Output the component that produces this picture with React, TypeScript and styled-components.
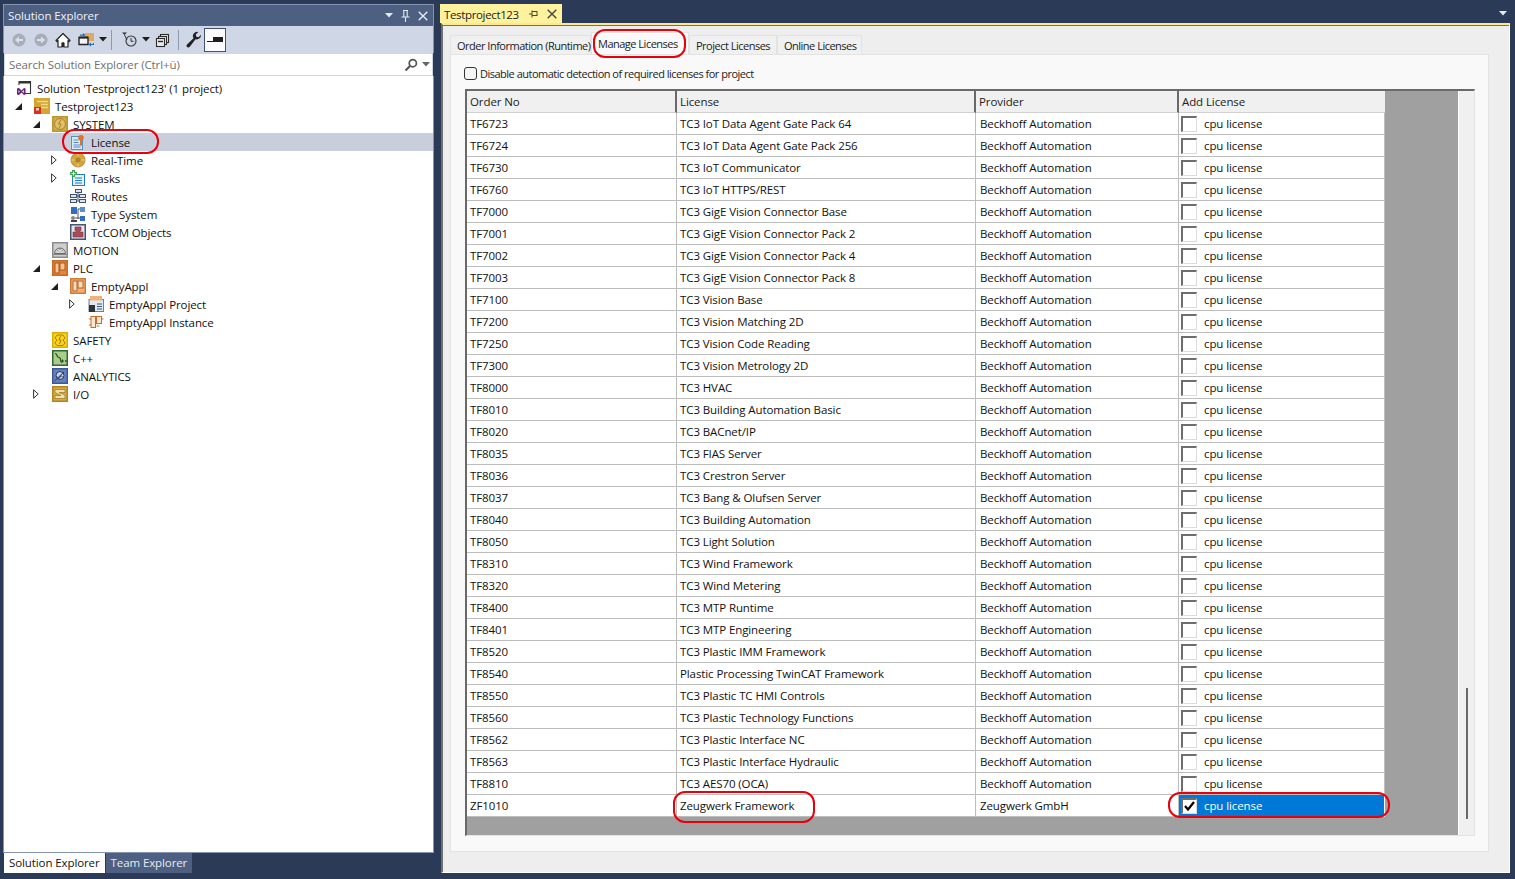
import React from 'react';
import styled, { createGlobalStyle } from 'styled-components';

const UI_FONT = '"Open Sans", "Noto Sans", "Liberation Sans", sans-serif';

const GlobalStyle = createGlobalStyle`
  html, body {
    margin: 0;
    padding: 0;
    background: #2a3a57;
    overflow: hidden;
  }
  * {
    box-sizing: border-box;
  }
`;

const Page = styled.div`
  width: 1515px;
  height: 879px;
  display: flex;
  background: #2a3a57;
  padding: 4px 0 6px 3px;
  font-family: ${UI_FONT};
  font-size: 11.5px;
  letter-spacing: -0.1px;
  color: #111;
`;

const Explorer = styled.section`
  width: 431px;
  display: flex;
  flex-direction: column;
  margin-right: 6px;
`;

const TitleBar = styled.div`
  height: 22px;
  background: #4d6082;
  color: #f0f2f7;
  display: flex;
  align-items: center;
  padding: 0 2px 0 4px;
  border: 1px solid #8494b5;
  border-bottom: 0;
`;

const TitleText = styled.span`
  flex: 1;
`;

const TitleButton = styled.span`
  width: 17px;
  display: flex;
  justify-content: center;
  align-items: center;
`;

const Toolbar = styled.div`
  height: 27px;
  background: #cfd6e5;
  display: flex;
  align-items: center;
  padding-left: 7px;
  border-left: 1px solid #8494b5;
  border-right: 1px solid #8494b5;
`;

const ToolSlot = styled.span<{ $ml?: number }>`
  display: flex;
  align-items: center;
  margin-left: ${(p) => p.$ml ?? 0}px;
`;

const ToolSep = styled.span<{ $ml: number }>`
  width: 1px;
  height: 20px;
  background: #8f99ad;
  margin-left: ${(p) => p.$ml}px;
`;

const ToggleButton = styled.span`
  width: 22px;
  height: 24px;
  margin-left: 2px;
  background: #fbfbfd;
  border: 1px solid #3f5478;
  display: flex;
  align-items: center;
  justify-content: center;
`;

const SearchBar = styled.div`
  height: 23px;
  background: #fff;
  margin: 0 1px;
  border: 1px solid #cfd6e5;
  display: flex;
  align-items: center;
  padding: 0 2px 0 4px;
  color: #6f6f6f;
`;

const SearchText = styled.span`
  flex: 1;
`;

const Tree = styled.div`
  flex: 1;
  background: #fff;
  padding-top: 3px;
  border-left: 1px solid #8494b5;
  border-right: 1px solid #8494b5;
  border-bottom: 1px solid #8494b5;
`;

const TreeRow = styled.div<{ $level: number; $selected?: boolean }>`
  height: 18px;
  display: flex;
  align-items: center;
  padding-left: ${(p) => p.$level * 18}px;
  background: ${(p) => (p.$selected ? '#c9cedc' : 'transparent')};
  white-space: nowrap;
`;

const Expander = styled.span`
  width: 11px;
  height: 18px;
  display: flex;
  align-items: center;
  margin-right: 1px;
`;

const ExpanderShift = styled.span`
  display: flex;
  margin-left: -7px;
`;

const NodeIcon = styled.span`
  width: 16px;
  height: 16px;
  display: flex;
`;

const NodeLabel = styled.span`
  position: relative;
  margin-left: 5px;
`;

const Ring = styled.span`
  position: absolute;
  border: 2px solid #e8000d;
  border-radius: 12px;
  pointer-events: none;
  z-index: 2;
`;

const LicenseRing = styled(Ring)`
  left: -29px;
  top: -6px;
  width: 97px;
  height: 25px;
`;

const BottomTabs = styled.div`
  height: 20px;
  display: flex;
  padding-left: 1px;
`;

const BottomTab = styled.div<{ $active?: boolean }>`
  height: 20px;
  padding: 0 5px ${(p) => (p.$active ? 2 : 1)}px 5px;
  display: flex;
  align-items: center;
  margin-right: 1px;
  background: ${(p) => (p.$active ? '#fff' : '#4d6082')};
  color: ${(p) => (p.$active ? '#111' : '#e8ebf2')};
`;

const DocumentArea = styled.main`
  flex: 1;
  display: flex;
  flex-direction: column;
  margin-right: 5px;
`;

const DocTabs = styled.div`
  height: 19px;
  display: flex;
  align-items: center;
  justify-content: space-between;
`;

const DocTab = styled.div`
  width: 122px;
  height: 19px;
  background: #fff29d;
  display: flex;
  align-items: center;
  padding: 1px 0 0 4px;
  color: #222;
`;

const DocTabText = styled.span`
  flex: 1;
  letter-spacing: -0.35px;
`;

const DocTabButton = styled.span`
  width: 15px;
  margin-right: 3px;
  display: flex;
  justify-content: center;
`;

const WellMenu = styled.span`
  display: flex;
  margin-right: 3px;
`;

const DocBody = styled.div`
  flex: 1;
  margin-left: 1px;
  border-top: 2px solid #ffe88c;
  background: #eeeeef;
  border-right: 1px solid #fff;
  border-bottom: 1px solid #fff;
  border-left: 2px solid #707070;
  box-shadow: inset 0 1px 0 #707070;
  padding: 10px 20px 20px 7px;
  display: flex;
  flex-direction: column;
`;

const TabStrip = styled.div`
  height: 19px;
  display: flex;
  align-items: flex-end;
  font-size: 11px;
  letter-spacing: -0.5px;
  color: #222;
`;

const FormTab = styled.div<{ $active?: boolean; $width: number }>`
  position: relative;
  height: ${(p) => (p.$active ? 22 : 19)}px;
  width: ${(p) => p.$width}px;
  padding: ${(p) => (p.$active ? '0 0 0 6px' : '0 0 0 6px')};
  display: flex;
  align-items: center;
  background: ${(p) => (p.$active ? '#f9f9f9' : '#f0f0f0')};
  border: 1px solid #e3e3e3;
  border-bottom: 0;
  white-space: nowrap;
`;

const ManageRing = styled(Ring)`
  left: 1px;
  top: -4px;
  width: 93px;
  height: 29px;
`;

const TabPanel = styled.div`
  flex: 1;
  background: #f9f9f9;
  border: 1px solid #e3e3e3;
  padding: 0 13px 15px 14px;
  display: flex;
  flex-direction: column;
`;

const OptionRow = styled.label`
  height: 34px;
  display: flex;
  align-items: center;
  font-size: 11px;
  letter-spacing: -0.5px;
  color: #222;
  padding-top: 2px;
  flex-shrink: 0;
`;

const RoundCheck = styled.span`
  width: 13px;
  height: 13px;
  border: 1px solid #333;
  border-radius: 3px;
  background: #f6f6f6;
  margin: 0 3px 0 -1px;
`;

const GridFrame = styled.div`
  flex: 1;
  display: flex;
  border-top: 2px solid #696969;
  border-left: 2px solid #696969;
  border-right: 1px solid #e3e3e3;
  border-bottom: 1px solid #e3e3e3;
  min-height: 0;
`;

const GridCanvas = styled.div`
  width: 991px;
  background: #a0a0a0;
`;

const Table = styled.div`
  width: 918px;
  display: grid;
  grid-template-columns: 210px 299px 203px 206px;
  grid-auto-rows: 22px;
`;

const HeaderCell = styled.div<{ $last?: boolean }>`
  background: #f0f0f0;
  display: flex;
  align-items: center;
  padding-left: 3px;
  border-right: ${(p) => (p.$last ? '0' : '2px solid #696969')};
  border-bottom: 1px solid #d0d0d0;
  color: #222;
`;

const Cell = styled.div`
  position: relative;
  background: #fff;
  display: flex;
  align-items: center;
  padding-left: 3px;
  border-right: 1px solid #bdbdbd;
  border-bottom: 1px solid #bdbdbd;
  white-space: nowrap;
`;

const ProviderCell = styled(Cell)`
  padding-left: 4px;
`;

const ZeugwerkRing = styled(Ring)`
  left: -4px;
  top: -4px;
  width: 142px;
  height: 32px;
`;

const LicenseCell = styled(Cell)<{ $selected?: boolean }>`
  padding-left: 2px;
  background: ${(p) => (p.$selected ? '#0078d7' : '#fff')};
  color: ${(p) => (p.$selected ? '#fff' : '#111')};
  border-right: ${(p) => (p.$selected ? '1px solid #fff' : '1px solid #bdbdbd')};
  border-bottom: ${(p) => (p.$selected ? '1px solid #fff' : '1px solid #bdbdbd')};
`;

const CpuRing = styled(Ring)`
  left: -11px;
  top: -3px;
  width: 222px;
  height: 26px;
`;

const GridCheck = styled.span`
  width: 16px;
  height: 16px;
  background: #fff;
  border-top: 2px solid #6e6e6e;
  border-left: 2px solid #6e6e6e;
  border-right: 1px solid #dcdcdc;
  border-bottom: 1px solid #dcdcdc;
  margin-right: 7px;
  display: flex;
  align-items: center;
  justify-content: center;
  flex-shrink: 0;
`;

const ScrollTrack = styled.div`
  flex: 1;
  background: #f0f0f0;
  border-left: 1px solid #fff;
  display: flex;
  justify-content: center;
  align-items: flex-end;
  padding-bottom: 16px;
`;

const ScrollThumb = styled.div`
  width: 2px;
  height: 131px;
  background: #696969;
`;

const Caret = ({ color = '#1e1e1e' }: { color?: string }) => (
  <svg width="8" height="5" viewBox="0 0 8 5">
    <path d="M0 0h8L4 4.500z" fill={color} />
  </svg>
);

const ArrowCircle = ({ flip }: { flip?: boolean }) => (
  <svg width="16" height="16" viewBox="0 0 16 16">
    <circle cx="8" cy="8" r="6.500" fill="#a7adb9" />
    <path d={flip ? 'M4 7h4V4.500L12 8l-4 3.500V9H4z' : 'M12 7H8V4.500L4 8l4 3.500V9h4z'} fill="#dde1ea" />
  </svg>
);

const HomeIcon = () => (
  <svg width="16" height="16" viewBox="0 0 16 16">
    <path d="M8 1.500 1 8.500l1 1 1-1V15h4v-4h2v4h4V8.500l1 1 1-1z" fill="#fff" stroke="#252525" strokeWidth="1.200" strokeLinejoin="round" />
    <rect x="7" y="10.500" width="2" height="4.500" fill="#252525" />
  </svg>
);

const SyncIcon = () => (
  <svg width="17" height="17" viewBox="0 0 17 17">
    <path d="M7 2h9v8H7z" fill="#dcaa60" />
    <path d="M1 6.500h9v7H1z" fill="#f3f4f7" stroke="#252525" strokeWidth="1.400" />
    <path d="M1 6.500h9" stroke="#252525" strokeWidth="2" />
    <path d="M2 3.500h3V2l2.500 2L5 6V4.800H2z" fill="#1f6fb5" />
    <path d="M16 12v2h-3v1.500L10.500 13.500 13 11.500V13h2v-1z" fill="#1f6fb5" />
  </svg>
);

const HistoryIcon = () => (
  <svg width="17" height="17" viewBox="0 0 17 17">
    <circle cx="10" cy="10" r="5" fill="none" stroke="#333" strokeWidth="1.100" />
    <path d="M10 7v3.300h2.500" fill="none" stroke="#333" strokeWidth="1" />
    <path d="M1 1.500h5L3.500 4z" fill="#333" />
    <path d="M3.500 4 6 9" stroke="#333" strokeWidth="1" />
  </svg>
);

const CollapseIcon = () => (
  <svg width="16" height="16" viewBox="0 0 16 16">
    <g fill="#e7eaf1" stroke="#2a2a2a" strokeWidth="1.100">
      <rect x="6.500" y="2.500" width="8" height="8" />
      <rect x="4.500" y="4.500" width="8" height="8" />
      <rect x="2.500" y="6.500" width="8" height="8" />
    </g>
    <path d="M4 9.500h5" stroke="#2a2a2a" strokeWidth="1.400" />
  </svg>
);

const WrenchIcon = () => (
  <svg width="16" height="17" viewBox="0 0 16 17">
    <path d="M15 4.200a4.200 4.200 0 0 1-5.500 4L3.800 15.800a1.800 1.800 0 0 1-2.800-2.400l6.500-6.200A4.200 4.200 0 0 1 12.300 1L9.800 3.500l.6 2.200 2.200.6L15 3.800z" fill="#222" />
  </svg>
);

const SearchIcon = () => (
  <svg width="14" height="14" viewBox="0 0 14 14">
    <circle cx="8.800" cy="5.200" r="3.600" fill="none" stroke="#555" strokeWidth="1.700" />
    <path d="M6 8 1.500 12.500" stroke="#555" strokeWidth="2.200" />
  </svg>
);

const PinIcon = () => (
  <svg width="9" height="12" viewBox="0 0 9 12">
    <path d="M2 .5h5M2.800.5v6M6.200.5v6M.5 7h8M4.500 7v5" stroke="#e6e9f0" strokeWidth="1.100" fill="none" />
  </svg>
);

const SidePinIcon = () => (
  <svg width="9" height="8" viewBox="0 0 9 8">
    <path d="M0 4h3M3 .5v7M3 1.500h5M3 5.500h5M8 1v5" stroke="#444" strokeWidth="1" fill="none" />
  </svg>
);

const CloseIcon = ({ color = '#e6e9f0' }: { color?: string }) => (
  <svg width="10" height="10" viewBox="0 0 10 10">
    <path d="M.7.7l8.600 8.600M9.300.7.700 9.300" stroke={color} strokeWidth="1.400" />
  </svg>
);

const ExpandedArrow = () => (
  <svg width="7" height="7" viewBox="0 0 7 7">
    <path d="M7 0v7H0z" fill="#1e1e1e" />
  </svg>
);

const CollapsedArrow = () => (
  <svg width="6" height="10" viewBox="0 0 6 10">
    <path d="M.6.800 5.200 5 .6 9.200z" fill="#fff" stroke="#333" strokeWidth="1" />
  </svg>
);

type IconName =
  | 'solution' | 'project' | 'system' | 'license' | 'realtime' | 'tasks' | 'routes' | 'types' | 'tccom'
  | 'motion' | 'plc' | 'plcChild' | 'plcProject' | 'plcInstance' | 'safety' | 'cpp' | 'analytics' | 'io';

const Box = ({ fill, stroke, children }: { fill: string; stroke: string; children?: React.ReactNode }) => (
  <svg width="16" height="16" viewBox="0 0 16 16">
    <rect x=".75" y=".75" width="14.500" height="14.500" fill={fill} stroke={stroke} strokeWidth="1.500" />
    {children}
  </svg>
);

const TreeIcon = ({ name }: { name: IconName }) => {
  switch (name) {
    case 'solution':
      return (
        <svg width="16" height="16" viewBox="0 0 16 16">
          <path d="M3 5V1.500h11.500v12H9" fill="none" stroke="#333" strokeWidth="1.100" />
          <path d="M3 2h11.500v1.500H3z" fill="#333" />
          <path d="M1 8.500 3 8l2.500 2.500L8 8l1.500.5v6l-1.500.5-2.500-2.500L3 15l-2-.5z" fill="#68217a" />
          <path d="M2.500 10v3l1.300-1.500zM7.800 10 6 11.500 7.800 13z" fill="#fff" />
        </svg>
      );
    case 'project':
      return (
        <svg width="16" height="16" viewBox="0 0 16 16">
          <rect width="16" height="16" fill="#d4a534" />
          <path d="M3 3.500h11M7 6.500h7M7 9.500h7" stroke="#f0d888" strokeWidth="1.400" />
          <rect y="9" width="7" height="7" fill="#dc2f1a" />
          <rect x="2" y="10" width="3" height="2.500" fill="#f5cfc4" />
        </svg>
      );
    case 'system':
      return (
        <Box fill="#d2ac48" stroke="#bb952f">
          <circle cx="8" cy="8" r="5.500" fill="#dfc068" stroke="#a8832a" />
          <path d="M9 3.500 6.500 8H9l-2 4.500" fill="none" stroke="#a8832a" />
        </Box>
      );
    case 'license':
      return (
        <svg width="16" height="16" viewBox="0 0 16 16">
          <rect x="1.500" y="2.500" width="11" height="13" fill="#dbe8f5" stroke="#4f93c8" />
          <path d="M3.500 6h5M3.500 8.500h5M3.500 11h7M3.500 13h7" stroke="#4f93c8" />
          <circle cx="11" cy="3.800" r="2.800" fill="#e5702a" />
          <path d="M10 6h2v6l-1-1-1 1z" fill="#e5702a" />
        </svg>
      );
    case 'realtime':
      return (
        <svg width="16" height="16" viewBox="0 0 16 16">
          <circle cx="8" cy="8" r="7" fill="#d4a440" stroke="#b98d30" />
          <circle cx="8" cy="8" r="2.500" fill="#b0832a" />
          <path d="M8 1.500v3M8 11.500v3M1.500 8h3M11.500 8h3" stroke="#ecd492" strokeWidth="1" />
        </svg>
      );
    case 'tasks':
      return (
        <svg width="16" height="16" viewBox="0 0 16 16">
          <rect x="2.500" y="4.500" width="12" height="11" fill="#e4f1fb" stroke="#1f7fc4" />
          <path d="M5 8h7M5 10.500h7M5 13h7" stroke="#1f7fc4" />
          <path d="M2 0h3v2h2v3H5v2H2V5H0V2h2z" fill="#3fa45a" />
          <path d="M3.500 1.500v4M1.500 3.500h4" stroke="#fff" />
        </svg>
      );
    case 'routes':
      return (
        <svg width="16" height="16" viewBox="0 0 16 16" fill="#dfe6ee" stroke="#3d5570">
          <rect x="5.500" y="1.500" width="6" height="3" />
          <rect x=".5" y="6.500" width="6" height="3" />
          <rect x="9.500" y="6.500" width="6" height="3" />
          <rect x=".5" y="11.500" width="6" height="3" />
          <rect x="9.500" y="11.500" width="6" height="3" />
          <path d="M8 4.500v8M6.500 8h3M6.500 13h3" fill="none" />
        </svg>
      );
    case 'types':
      return (
        <svg width="16" height="16" viewBox="0 0 16 16">
          <rect x="1" y="1" width="6" height="7" fill="#2f6fc0" />
          <rect x="10" y="1" width="5" height="5" fill="#5c8fd0" />
          <rect x="10" y="10" width="5" height="5" fill="#2f6fc0" />
          <circle cx="3" cy="12" r="2" fill="#888" />
          <rect x="1" y="14" width="6" height="2" fill="#444" />
          <path d="M8 3v10M8 3h2M5 12h5" stroke="#555" fill="none" />
        </svg>
      );
    case 'tccom':
      return (
        <Box fill="#e2e4ea" stroke="#46566e">
          <path d="M5 3h6v3.500H9.800V8H13v5H3V8h3.200V6.500H5z" fill="#a84c5a" stroke="#6e2f3a" strokeWidth=".6" />
        </Box>
      );
    case 'motion':
      return (
        <Box fill="#cfcfcf" stroke="#8c8c8c">
          <path d="M2.500 11.500a5.500 5.500 0 0 1 11 0z" fill="none" stroke="#6f6f6f" />
          <path d="M8 6v1.500M4.500 7.500l1 1M11.500 7.500l-1 1" stroke="#6f6f6f" />
          <path d="M1.500 12.500h13" stroke="#808080" />
        </Box>
      );
    case 'plc':
      return (
        <Box fill="#e8853a" stroke="#c76a24">
          <rect x="3" y="3" width="4" height="10" fill="#f6c796" stroke="#a85618" />
          <rect x="8" y="3" width="5" height="7" fill="#f6c796" stroke="#a85618" />
        </Box>
      );
    case 'plcChild':
      return (
        <Box fill="#f2b078" stroke="#d07a35">
          <rect x="3" y="3" width="4" height="10" fill="#f9dcbc" stroke="#b4652a" />
          <rect x="8" y="3" width="5" height="7" fill="#f9dcbc" stroke="#b4652a" />
        </Box>
      );
    case 'plcProject':
      return (
        <svg width="16" height="16" viewBox="0 0 16 16">
          <rect x="1" y="3.500" width="14.500" height="12" fill="#dfe7f1" stroke="#6d8099" />
          <rect x="1" y="9" width="6" height="7" fill="#333" />
          <path d="M9 8h5M9 10.500h5M9 13h5" stroke="#3f5878" />
          <rect x="2" y="0" width="12" height="4.500" fill="#f2b177" />
        </svg>
      );
    case 'plcInstance':
      return (
        <svg width="16" height="16" viewBox="0 0 16 16" fill="#fbe7d2" stroke="#c56e2c">
          <rect x="3" y="2.500" width="4.500" height="11" />
          <rect x="8.500" y="2.500" width="5" height="7" />
          <path d="M1 5h2M1 11h2M13.500 5h2M8.500 12h3" fill="none" />
        </svg>
      );
    case 'safety':
      return (
        <Box fill="#fbd21e" stroke="#dcae00">
          <path d="M5 3h6l2 3-2 2 2 3-2 2.500H5L3 11l2-3-2-2z" fill="none" stroke="#a88000" />
          <path d="M8.500 4 7 8h2l-1.500 4" fill="none" stroke="#a88000" />
        </Box>
      );
    case 'cpp':
      return (
        <Box fill="#adcb8c" stroke="#2f6b2e">
          <path d="M3 3.500c3 0 1 4 4 4s0 4 3 5" fill="none" stroke="#1d561d" strokeWidth="1.200" />
          <path d="M10.500 9.500v3M9 11h3M13 11h1.500M13.800 10.200v1.600" stroke="#1d561d" />
        </Box>
      );
    case 'analytics':
      return (
        <Box fill="#6582c0" stroke="#3e5896">
          <circle cx="8" cy="7.500" r="4" fill="#c7d2e9" stroke="#26395f" />
          <path d="M2.500 13 12 4M5 8.500l2 2 2-3 2 2" fill="none" stroke="#26395f" />
        </Box>
      );
    case 'io':
      return (
        <Box fill="#d6ab3f" stroke="#b08720">
          <path d="M3 3.500h10v3H7l6 2.500v3.500H3V9.500h6L3 6.500z" fill="#f0dfa8" stroke="#8f6c12" strokeWidth=".6" />
        </Box>
      );
  }
};

type Node = {
  label: string;
  level: number;
  icon: IconName;
  expander?: 'open' | 'closed';
  selected?: boolean;
};

const nodes: Node[] = [
  { label: "Solution 'Testproject123' (1 project)", level: 0, icon: 'solution' },
  { label: 'Testproject123', level: 1, icon: 'project', expander: 'open' },
  { label: 'SYSTEM', level: 2, icon: 'system', expander: 'open' },
  { label: 'License', level: 3, icon: 'license', selected: true },
  { label: 'Real-Time', level: 3, icon: 'realtime', expander: 'closed' },
  { label: 'Tasks', level: 3, icon: 'tasks', expander: 'closed' },
  { label: 'Routes', level: 3, icon: 'routes' },
  { label: 'Type System', level: 3, icon: 'types' },
  { label: 'TcCOM Objects', level: 3, icon: 'tccom' },
  { label: 'MOTION', level: 2, icon: 'motion' },
  { label: 'PLC', level: 2, icon: 'plc', expander: 'open' },
  { label: 'EmptyAppl', level: 3, icon: 'plcChild', expander: 'open' },
  { label: 'EmptyAppl Project', level: 4, icon: 'plcProject', expander: 'closed' },
  { label: 'EmptyAppl Instance', level: 4, icon: 'plcInstance' },
  { label: 'SAFETY', level: 2, icon: 'safety' },
  { label: 'C++', level: 2, icon: 'cpp' },
  { label: 'ANALYTICS', level: 2, icon: 'analytics' },
  { label: 'I/O', level: 2, icon: 'io', expander: 'closed' },
];

const BECKHOFF = 'Beckhoff Automation';

const rows: [string, string, string][] = [
  ['TF6723', 'TC3 IoT Data Agent Gate Pack 64', BECKHOFF],
  ['TF6724', 'TC3 IoT Data Agent Gate Pack 256', BECKHOFF],
  ['TF6730', 'TC3 IoT Communicator', BECKHOFF],
  ['TF6760', 'TC3 IoT HTTPS/REST', BECKHOFF],
  ['TF7000', 'TC3 GigE Vision Connector Base', BECKHOFF],
  ['TF7001', 'TC3 GigE Vision Connector Pack 2', BECKHOFF],
  ['TF7002', 'TC3 GigE Vision Connector Pack 4', BECKHOFF],
  ['TF7003', 'TC3 GigE Vision Connector Pack 8', BECKHOFF],
  ['TF7100', 'TC3 Vision Base', BECKHOFF],
  ['TF7200', 'TC3 Vision Matching 2D', BECKHOFF],
  ['TF7250', 'TC3 Vision Code Reading', BECKHOFF],
  ['TF7300', 'TC3 Vision Metrology 2D', BECKHOFF],
  ['TF8000', 'TC3 HVAC', BECKHOFF],
  ['TF8010', 'TC3 Building Automation Basic', BECKHOFF],
  ['TF8020', 'TC3 BACnet/IP', BECKHOFF],
  ['TF8035', 'TC3 FIAS Server', BECKHOFF],
  ['TF8036', 'TC3 Crestron Server', BECKHOFF],
  ['TF8037', 'TC3 Bang & Olufsen Server', BECKHOFF],
  ['TF8040', 'TC3 Building Automation', BECKHOFF],
  ['TF8050', 'TC3 Light Solution', BECKHOFF],
  ['TF8310', 'TC3 Wind Framework', BECKHOFF],
  ['TF8320', 'TC3 Wind Metering', BECKHOFF],
  ['TF8400', 'TC3 MTP Runtime', BECKHOFF],
  ['TF8401', 'TC3 MTP Engineering', BECKHOFF],
  ['TF8520', 'TC3 Plastic IMM Framework', BECKHOFF],
  ['TF8540', 'Plastic Processing TwinCAT Framework', BECKHOFF],
  ['TF8550', 'TC3 Plastic TC HMI Controls', BECKHOFF],
  ['TF8560', 'TC3 Plastic Technology Functions', BECKHOFF],
  ['TF8562', 'TC3 Plastic Interface NC', BECKHOFF],
  ['TF8563', 'TC3 Plastic Interface Hydraulic', BECKHOFF],
  ['TF8810', 'TC3 AES70 (OCA)', BECKHOFF],
  ['ZF1010', 'Zeugwerk Framework', 'Zeugwerk GmbH'],
];

const App = () => (
  <>
    <GlobalStyle />
    <Page>
      <Explorer>
        <TitleBar>
          <TitleText>Solution Explorer</TitleText>
          <TitleButton><Caret color="#e6e9f0" /></TitleButton>
          <TitleButton><PinIcon /></TitleButton>
          <TitleButton><CloseIcon /></TitleButton>
        </TitleBar>
        <Toolbar>
          <ToolSlot><ArrowCircle /></ToolSlot>
          <ToolSlot $ml={6}><ArrowCircle flip /></ToolSlot>
          <ToolSlot $ml={6}><HomeIcon /></ToolSlot>
          <ToolSlot $ml={7}><SyncIcon /></ToolSlot>
          <ToolSlot $ml={4}><Caret /></ToolSlot>
          <ToolSep $ml={4} />
          <ToolSlot $ml={9}><HistoryIcon /></ToolSlot>
          <ToolSlot $ml={4}><Caret /></ToolSlot>
          <ToolSlot $ml={4}><CollapseIcon /></ToolSlot>
          <ToolSep $ml={8} />
          <ToolSlot $ml={7}><WrenchIcon /></ToolSlot>
          <ToggleButton>
            <svg width="16" height="7" viewBox="0 0 16 7">
              <path d="M0 5h6V1h10v5H0z" fill="#1e1e1e" />
            </svg>
          </ToggleButton>
        </Toolbar>
        <SearchBar>
          <SearchText>Search Solution Explorer (Ctrl+ü)</SearchText>
          <SearchIcon />
          <ToolSlot $ml={4}><Caret color="#666" /></ToolSlot>
        </SearchBar>
        <Tree>
          {nodes.map((node) => (
            <TreeRow key={node.label} $level={node.level} $selected={node.selected}>
              <Expander>
                {node.expander && (
                  <ExpanderShift>
                    {node.expander === 'open' ? <ExpandedArrow /> : <CollapsedArrow />}
                  </ExpanderShift>
                )}
              </Expander>
              <NodeIcon><TreeIcon name={node.icon} /></NodeIcon>
              <NodeLabel>
                {node.label}
                {node.selected && <LicenseRing />}
              </NodeLabel>
            </TreeRow>
          ))}
        </Tree>
        <BottomTabs>
          <BottomTab $active>Solution Explorer</BottomTab>
          <BottomTab>Team Explorer</BottomTab>
        </BottomTabs>
      </Explorer>
      <DocumentArea>
        <DocTabs>
          <DocTab>
            <DocTabText>Testproject123</DocTabText>
            <DocTabButton><SidePinIcon /></DocTabButton>
            <DocTabButton><CloseIcon color="#444" /></DocTabButton>
          </DocTab>
          <WellMenu><Caret color="#e6e9f0" /></WellMenu>
        </DocTabs>
        <DocBody>
          <TabStrip>
            <FormTab $width={141}>Order Information (Runtime)</FormTab>
            <FormTab $active $width={98}>
              Manage Licenses
              <ManageRing />
            </FormTab>
            <FormTab $width={88}>Project Licenses</FormTab>
            <FormTab $width={85}>Online Licenses</FormTab>
          </TabStrip>
          <TabPanel>
            <OptionRow>
              <RoundCheck />
              Disable automatic detection of required licenses for project
            </OptionRow>
            <GridFrame>
              <GridCanvas>
                <Table>
                  <HeaderCell>Order No</HeaderCell>
                  <HeaderCell>License</HeaderCell>
                  <HeaderCell>Provider</HeaderCell>
                  <HeaderCell $last>Add License</HeaderCell>
                  {rows.map(([order, license, provider]) => {
                    const added = order === 'ZF1010';
                    return (
                      <React.Fragment key={order}>
                        <Cell>{order}</Cell>
                        <Cell>
                          {license}
                          {added && <ZeugwerkRing />}
                        </Cell>
                        <ProviderCell>{provider}</ProviderCell>
                        <LicenseCell $selected={added}>
                          <GridCheck>
                            {added && (
                              <svg width="11" height="10" viewBox="0 0 11 10">
                                <path d="M1 5l3 3.500L10 1" fill="none" stroke="#000" strokeWidth="2.200" />
                              </svg>
                            )}
                          </GridCheck>
                          cpu license
                          {added && <CpuRing />}
                        </LicenseCell>
                      </React.Fragment>
                    );
                  })}
                </Table>
              </GridCanvas>
              <ScrollTrack>
                <ScrollThumb />
              </ScrollTrack>
            </GridFrame>
          </TabPanel>
        </DocBody>
      </DocumentArea>
    </Page>
  </>
);

export default App;
